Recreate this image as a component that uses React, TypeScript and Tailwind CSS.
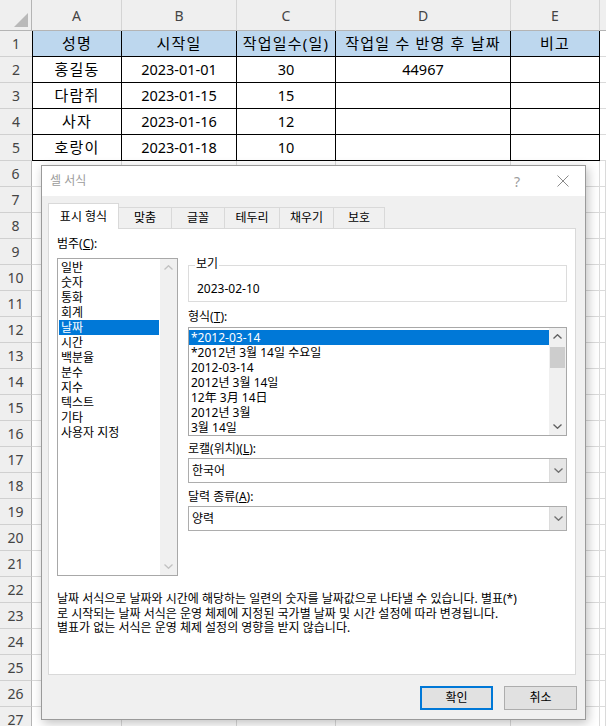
import React from "react";

const columnLetters = ["A", "B", "C", "D", "E"];

const tableRows: string[][] = [
	["성명", "시작일", "작업일수(일)", "작업일 수 반영 후 날짜", "비고"],
	["홍길동", "2023-01-01", "30", "44967", ""],
	["다람쥐", "2023-01-15", "15", "", ""],
	["사자", "2023-01-16", "12", "", ""],
	["호랑이", "2023-01-18", "10", "", ""],
];

const categories = [
	"일반",
	"숫자",
	"통화",
	"회계",
	"날짜",
	"시간",
	"백분율",
	"분수",
	"지수",
	"텍스트",
	"기타",
	"사용자 지정",
];

const formats = [
	"*2012-03-14",
	"*2012년 3월 14일 수요일",
	"2012-03-14",
	"2012년 3월 14일",
	"12年 3月 14日",
	"2012년 3월",
	"3월 14일",
];

const tabs = [
	{ label: "맞춤", w: "w-[53px]" },
	{ label: "글꼴", w: "w-[53px]" },
	{ label: "테두리", w: "w-[55px]" },
	{ label: "채우기", w: "w-[54px]" },
	{ label: "보호", w: "w-[51px]" },
];

const hangul = /[가-힣]/;

function Chevron({ dir, color }: { dir: "up" | "down"; color: string }) {
	return (
		<svg width="9" height="5" viewBox="0 0 9 5">
			<path
				d={dir === "up" ? "M0.5 4.5 L4.5 0.7 L8.5 4.5" : "M0.5 0.5 L4.5 4.3 L8.5 0.5"}
				fill="none"
				stroke={color}
				strokeWidth="1.3"
			/>
		</svg>
	);
}

function Sheet() {
	const blankRows = Array.from({ length: 22 }, (_, i) => i + 6);
	return (
		<div className="grid grid-cols-[32px_90px_115px_99px_175px_89px_1fr] grid-rows-[31px] auto-rows-[26px] text-[14.5px] text-black">
			{/* column headers */}
			<div className="relative border-b border-r border-[#b4b4b4] bg-[#efefef]">
				<svg className="absolute right-[3px] bottom-[3px]" width="14" height="14" viewBox="0 0 14 14">
					<path d="M14 0 L14 14 L0 14 Z" fill="#b9b9b9" />
				</svg>
			</div>
			{columnLetters.map((c) => (
				<div
					key={c}
					className="flex items-center justify-center border-b border-r border-b-[#b4b4b4] border-r-[#d4d4d4] bg-[#efefef] text-[14px] text-[#444]"
				>
					{c}
				</div>
			))}
			<div className="border-b border-[#b4b4b4] bg-[#efefef]" />

			{/* bordered table rows 1-5 */}
			{tableRows.map((row, r) => (
				<React.Fragment key={r}>
					<div className="flex items-center justify-center border-b border-[#d0d0d0] bg-[#efefef] text-[14px] text-[#444]">
						{r + 1}
					</div>
					{row.map((val, c) => (
						<div
							key={c}
							className={`flex items-center justify-center border-b border-r border-black ${
								c === 0 ? "border-l" : ""
							} ${r === 0 ? "bg-[#bdd7ee]" : "bg-white"} ${
								hangul.test(val) ? "text-[15px] tracking-[1.2px]" : ""
							}`}
						>
							{val}
						</div>
					))}
					<div className="border-b border-[#dadada]" />
				</React.Fragment>
			))}

			{/* empty rows */}
			{blankRows.map((n) => (
				<React.Fragment key={n}>
					<div className="flex items-center justify-center border-b border-r border-b-[#d0d0d0] border-r-[#b4b4b4] bg-[#efefef] text-[14px] text-[#444]">
						{n}
					</div>
					{[0, 1, 2, 3, 4, 5].map((c) => (
						<div key={c} className="border-b border-r border-[#dadada]" />
					))}
				</React.Fragment>
			))}
		</div>
	);
}

function ComboBox({ value }: { value: string }) {
	return (
		<div className="flex h-[25px] items-center border border-[#adadad] bg-white">
			<span className="pl-[3px] leading-[15px]">{value}</span>
			<div className="ml-auto flex h-full w-[17px] items-center justify-center border-l border-[#dcdcdc] bg-[#e6e6e6]">
				<Chevron dir="down" color="#707070" />
			</div>
		</div>
	);
}

function FormatCellsDialog() {
	return (
		<div className="absolute left-[41px] top-[165px] flex h-[555px] w-[545px] flex-col border border-[#9a9a9a] bg-[#f0f0f0] text-[12px] text-black shadow-[2px_3px_10px_rgba(0,0,0,0.25)]">
			{/* title bar */}
			<div className="flex h-[30px] shrink-0 items-center bg-white pl-[8px]">
				<span className="text-[12px] text-[#9c9c9c]">셀 서식</span>
				<span className="ml-auto mr-[37px] text-[14px] text-[#9c9c9c]">?</span>
				<svg className="mr-[16px]" width="12" height="12" viewBox="0 0 12 12">
					<path d="M0.5 0.5 L11.5 11.5 M11.5 0.5 L0.5 11.5" stroke="#8a8a8a" strokeWidth="1" />
				</svg>
			</div>

			<div className="flex flex-1 flex-col pl-[6px] pt-[7px]">
				{/* tabs */}
				<div className="flex h-[25px] items-end">
					<div className="relative z-10 -mb-px flex h-[26px] w-[71px] items-center justify-center border-l border-r border-t border-[#d9d9d9] bg-white">
						표시 형식
					</div>
					{tabs.map((t) => (
						<div
							key={t.label}
							className={`flex h-[21px] ${t.w} items-center justify-center border-r border-t border-[#d9d9d9] bg-[#f0f0f0]`}
						>
							{t.label}
						</div>
					))}
				</div>

				{/* tab panel */}
				<div className="flex h-[447px] w-[528px] flex-col border border-[#d9d9d9] bg-white">
					<div className="flex gap-[10px] px-[8px] pt-[7px]">
						{/* category */}
						<div className="flex flex-col">
							<div className="leading-[15px]">
								범주(<u>C</u>):
							</div>
							<div className="mt-[7px] flex h-[318px] w-[121px] border border-[#a8a8a8]">
								<div className="flex-1 px-px pt-px">
									{categories.map((c) => (
										<div
											key={c}
											className={`pl-[2px] leading-[15px] whitespace-nowrap ${
												c === "날짜" ? "bg-[#0078d7] text-white" : ""
											}`}
										>
											{c}
										</div>
									))}
								</div>
								<div className="flex w-[17px] flex-col justify-between bg-[#f0f0f0]">
									<div className="flex h-[17px] items-center justify-center">
										<Chevron dir="up" color="#c2c2c2" />
									</div>
									<div className="flex h-[17px] items-center justify-center">
										<Chevron dir="down" color="#c2c2c2" />
									</div>
								</div>
							</div>
						</div>

						{/* right column */}
						<div className="flex w-[381px] flex-col">
							<div className="relative mt-[29px] h-[37px] border border-[#dcdcdc]">
								<span className="absolute left-[6px] top-[-10px] bg-white px-px leading-[15px]">보기</span>
								<div className="pl-[8px] pt-[15px] leading-[15px]">2023-02-10</div>
							</div>

							<div className="mt-[7px] leading-[15px]">
								형식(<u>T</u>):
							</div>
							<div className="mt-[3px] flex h-[109px] border border-[#a8a8a8]">
								<div className="flex-1 pt-[2px]">
									{formats.map((f, i) => (
										<div
											key={f}
											className={`pl-[2px] leading-[15px] whitespace-nowrap ${
												i === 0 ? "bg-[#0078d7] text-white" : ""
											}`}
										>
											{f}
										</div>
									))}
								</div>
								<div className="flex w-[17px] flex-col bg-[#f0f0f0]">
									<div className="flex h-[17px] items-center justify-center">
										<Chevron dir="up" color="#606060" />
									</div>
									<div className="mx-px mt-[2px] h-[21px] bg-[#cdcdcd]" />
									<div className="mt-auto flex h-[17px] items-center justify-center">
										<Chevron dir="down" color="#606060" />
									</div>
								</div>
							</div>

							<div className="mt-[5px] leading-[15px]">
								로캘(위치)(<u>L</u>):
							</div>
							<div className="mt-[2px]">
								<ComboBox value="한국어" />
							</div>

							<div className="mt-[6px] leading-[15px]">
								달력 종류(<u>A</u>):
							</div>
							<div className="mt-[2px]">
								<ComboBox value="양력" />
							</div>
						</div>
					</div>

					<p className="mt-[16px] px-[8px] leading-[14.5px] whitespace-nowrap">
						날짜 서식으로 날짜와 시간에 해당하는 일련의 숫자를 날짜값으로 나타낼 수 있습니다. 별표(*)
						<br />로 시작되는 날짜 서식은 운영 체제에 지정된 국가별 날짜 및 시간 설정에 따라 변경됩니다.
						<br />별표가 없는 서식은 운영 체제 설정의 영향을 받지 않습니다.
					</p>
				</div>

				{/* buttons */}
				<div className="mt-[11px] flex justify-end gap-[11px] pr-[8px]">
					<button className="flex h-[24px] w-[73px] items-center justify-center border-2 border-[#0078d7] bg-[#e1e1e1]">
						확인
					</button>
					<button className="flex h-[24px] w-[73px] items-center justify-center border border-[#adadad] bg-[#e1e1e1]">
						취소
					</button>
				</div>
			</div>
		</div>
	);
}

export default function App() {
	return (
		<div className="relative h-[726px] w-[606px] overflow-hidden bg-white font-['Noto_Sans','Noto_Sans_CJK_KR',sans-serif]">
			<Sheet />
			<FormatCellsDialog />
		</div>
	);
}
